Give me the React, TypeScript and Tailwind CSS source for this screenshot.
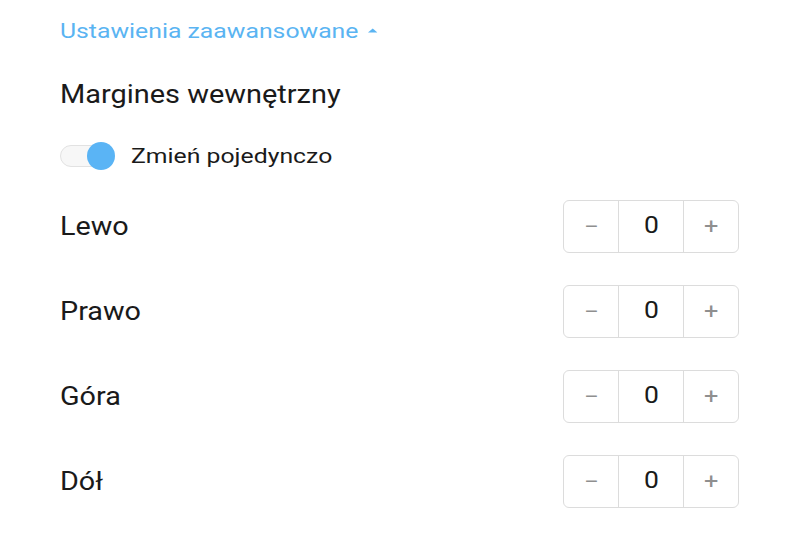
import React, { useState } from "react";

const rows = ["Lewo", "Prawo", "Góra", "Dół"];

const Stepper = ({ value }: { value: number }) => {
  return (
    <div className="flex h-[53px] w-[176px] rounded-[6px] border border-[#dcdcdc] text-[#8f8f8f]">
      <button className="flex w-[55px] items-center justify-center border-r border-[#dcdcdc] text-[22px]">
        <span className="scale-x-[1.2]">−</span>
      </button>
      <div className="flex flex-1 items-center justify-center text-[23px] text-[#1a1a1a]">
        <span className="scale-x-[1.15]">{value}</span>
      </div>
      <button className="flex w-[55px] items-center justify-center border-l border-[#dcdcdc] text-[22px]">
        <span className="scale-x-[1.15]">+</span>
      </button>
    </div>
  );
};

export default function App() {
  const [single, setSingle] = useState(true);

  return (
    <div className="h-[536px] w-[796px] overflow-hidden bg-white pl-[60px] pr-[57px] pt-[16px] font-['Roboto',sans-serif] text-[#1a1a1a]">
      <button className="flex w-fit origin-left scale-x-[1.18] items-center gap-[8px] text-[21px] text-[#5ab4f2]">
        Ustawienia zaawansowane
        <svg width="8" height="5" viewBox="0 0 10 6" className="mb-[2px]">
          <path d="M0 5.5 L5 0.5 L10 5.5 Z" fill="#5ab4f2" />
        </svg>
      </button>

      <h3 className="mt-[31px] w-fit origin-left scale-x-[1.157] text-[25px] leading-[32px]">
        Margines wewnętrzny
      </h3>

      <label className="mt-[30px] flex items-center gap-[19px]">
        <button
          onClick={() => setSingle(!single)}
          className="relative h-[22px] w-[52px] rounded-full border border-[#e2e2e2] bg-[#f7f7f7]"
        >
          <span
            className={`absolute top-1/2 h-[28px] w-[28px] -translate-y-1/2 rounded-full bg-[#5ab4f5] ${
              single ? "left-[26px]" : "left-[-2px]"
            }`}
          />
        </button>
        <span className="inline-block origin-left scale-x-[1.18] text-[21px]">Zmień pojedynczo</span>
      </label>

      <div className="mt-[28px] flex flex-col gap-[32px]">
        {rows.map((r) => (
          <div key={r} className="flex items-center justify-between">
            <span className="inline-block origin-left scale-x-[1.15] text-[25px]">{r}</span>
            <Stepper value={0} />
          </div>
        ))}
      </div>
    </div>
  );
}
